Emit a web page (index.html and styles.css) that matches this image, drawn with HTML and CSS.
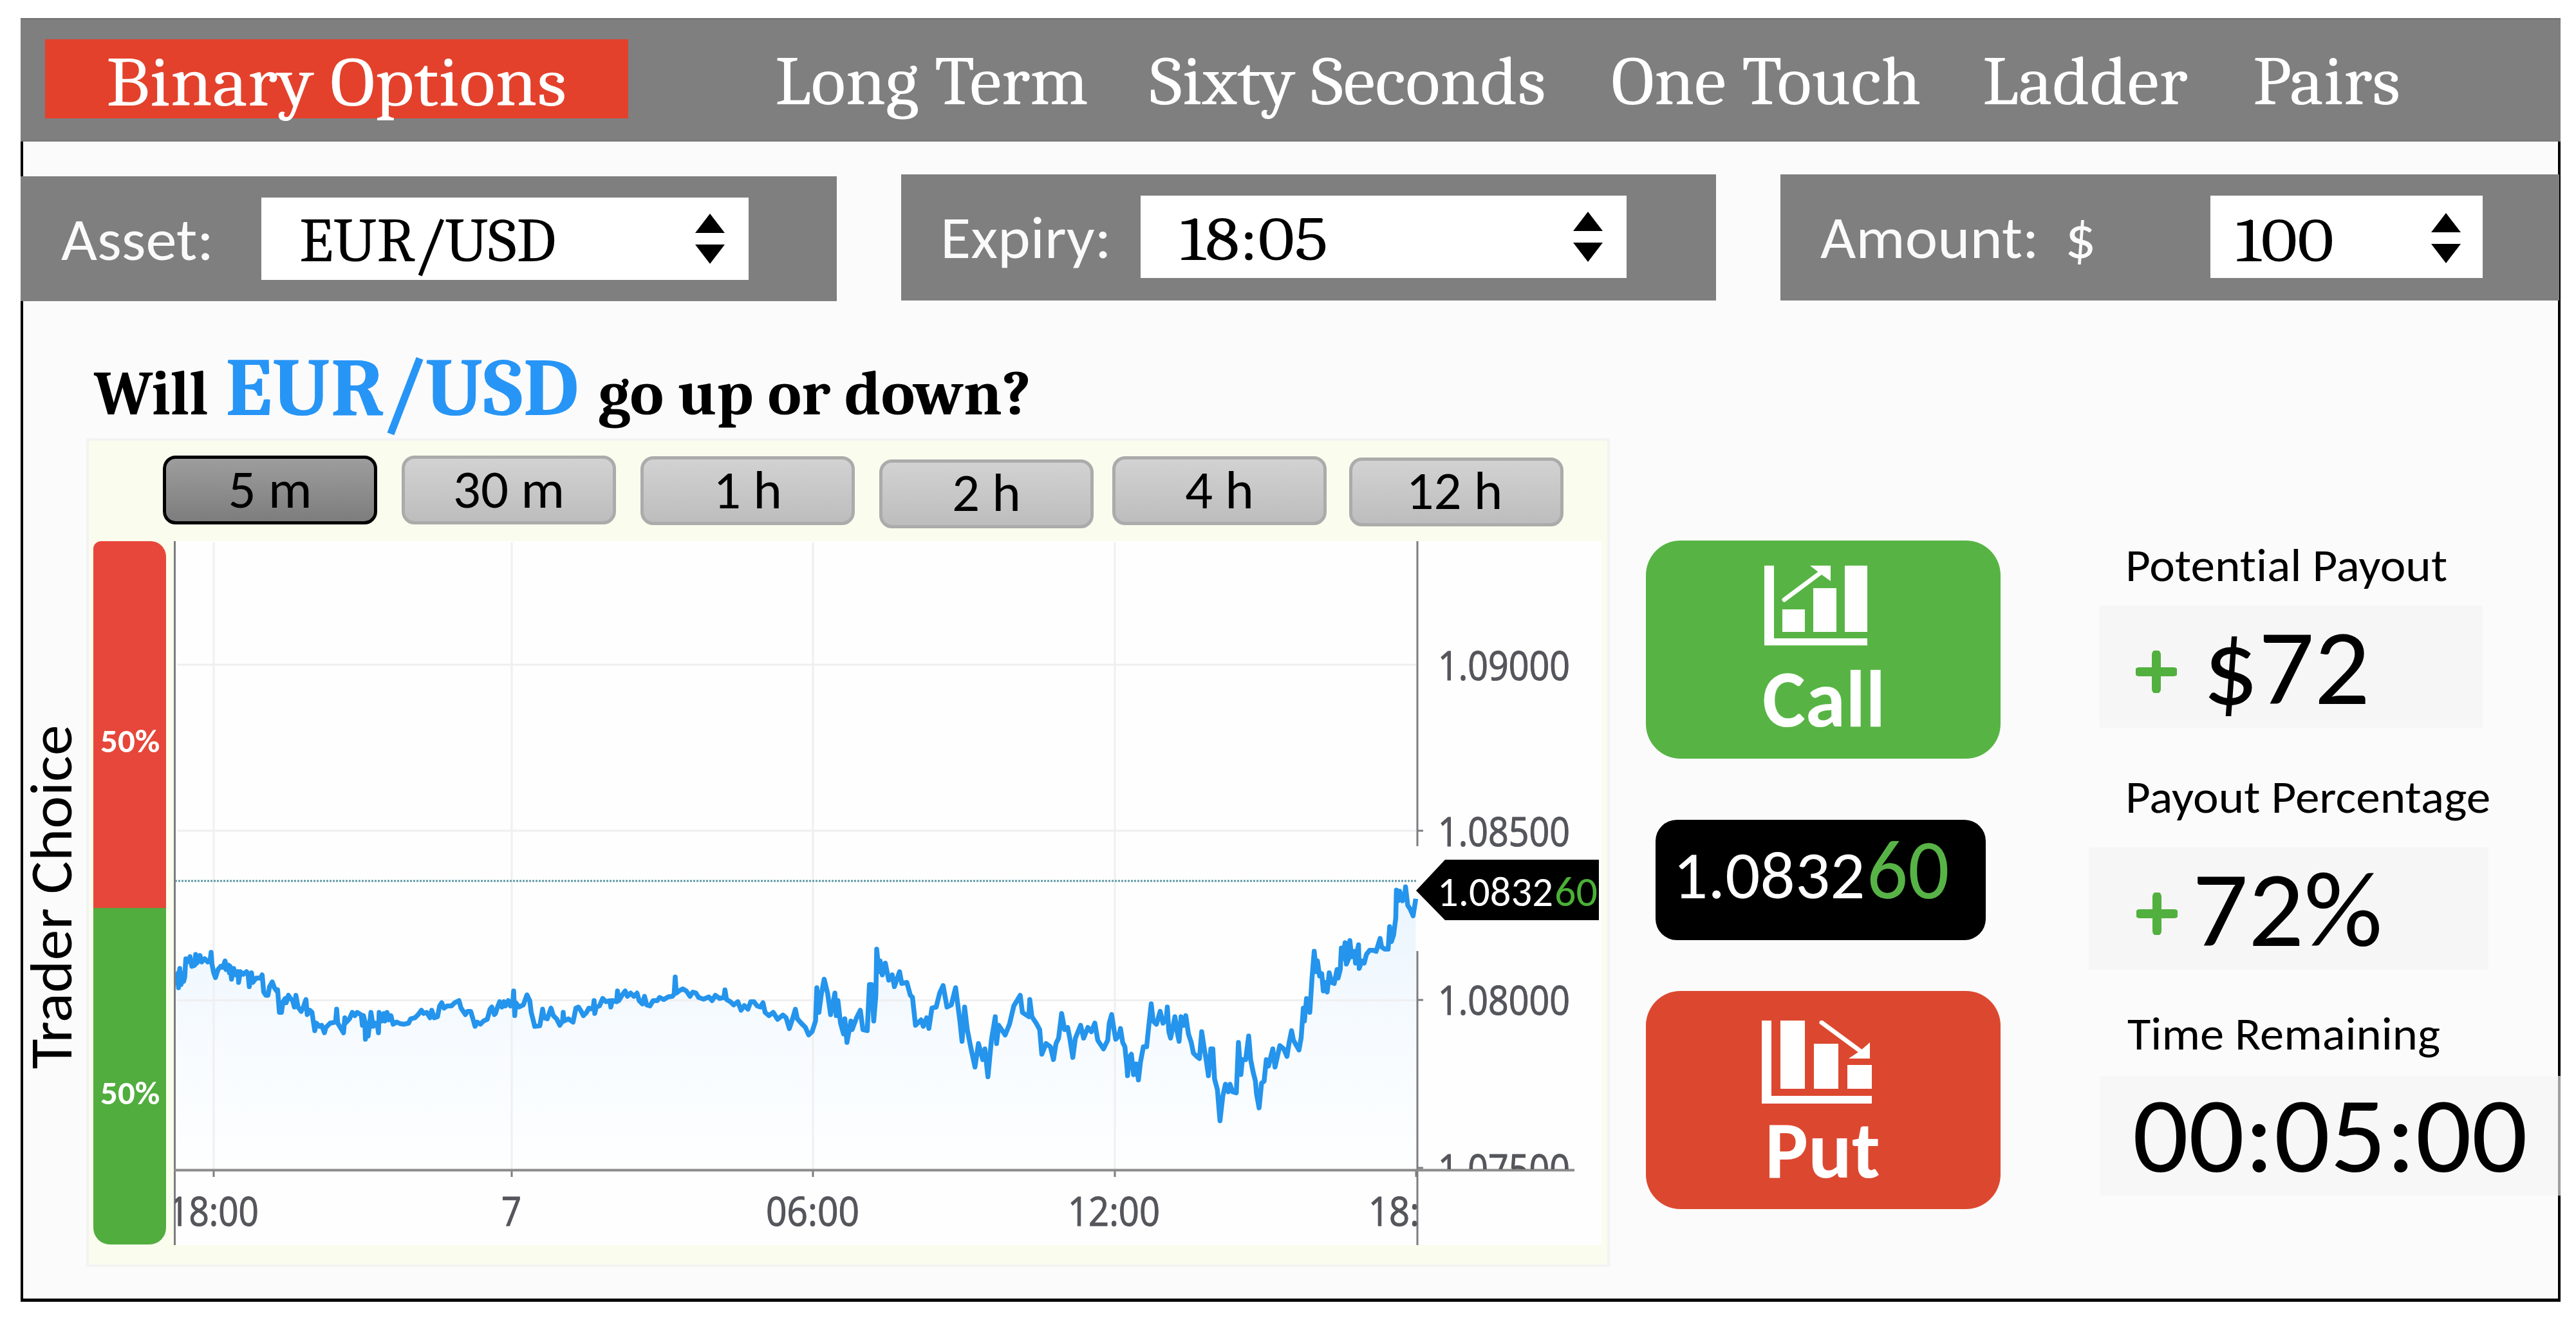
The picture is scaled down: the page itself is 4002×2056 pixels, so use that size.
FILE: index.html
```html
<!DOCTYPE html>
<html lang="en">
<head>
<meta charset="utf-8">
<title>Binary Options</title>
<link rel="stylesheet" href="styles.css">
</head>
<body>
<div class="app">
  <nav class="tabs">
    <a class="tab tab-active"><span class="fit">Binary Options</span></a>
    <div class="tab-list">
      <a class="tab"><span class="fit">Long Term</span></a>
      <a class="tab"><span class="fit">Sixty Seconds</span></a>
      <a class="tab"><span class="fit">One Touch</span></a>
      <a class="tab"><span class="fit">Ladder</span></a>
      <a class="tab"><span class="fit">Pairs</span></a>
    </div>
  </nav>
  <div class="body">
    <div class="toolbar">
      <div class="panel panel-asset">
        <span class="panel-label fit">Asset:</span>
        <div class="field"><span class="fit value">EUR<span class="slash">/</span>USD</span>
          <svg class="spin" viewBox="0 0 46 78"><path d="M23 0 46 30H0zM0 48H46L23 78z"/></svg></div>
      </div>
      <div class="panel panel-expiry">
        <span class="panel-label fit">Expiry:</span>
        <div class="field"><span class="fit value digits">18:05</span>
          <svg class="spin" viewBox="0 0 46 78"><path d="M23 0 46 30H0zM0 48H46L23 78z"/></svg></div>
      </div>
      <div class="panel panel-amount">
        <span class="panel-label fit">Amount:</span>
        <span class="panel-label currency fit">$</span>
        <div class="field"><span class="fit value digits">100</span>
          <svg class="spin" viewBox="0 0 46 78"><path d="M23 0 46 30H0zM0 48H46L23 78z"/></svg></div>
      </div>
    </div>
    <div class="main">
      <div class="side"><span class="side-label">Trader Choice</span></div>
      <section class="market">
        <h1 class="question"><span class="fit q-will">Will</span><span class="fit q-pair">EUR<span class="slash">/</span>USD</span><span class="fit q-rest">go up or down?</span></h1>
        <div class="card">
          <div class="ranges">
            <button class="range range-on"><span class="fit">5 m</span></button>
            <button class="range"><span class="fit">30 m</span></button>
            <button class="range r1"><span class="fit">1 h</span></button>
            <button class="range r2"><span class="fit">2 h</span></button>
            <button class="range r4"><span class="fit">4 h</span></button>
            <button class="range r12"><span class="fit">12 h</span></button>
          </div>
          <div class="chart-row">
            <div class="gauge">
              <div class="gauge-put"><span class="fit">50%</span></div>
              <div class="gauge-call"><span class="fit">50%</span></div>
            </div>
            <svg class="chart" viewBox="270 841 2218 1094">
              <defs>
                <linearGradient id="fade" x1="0" y1="1370" x2="0" y2="1818" gradientUnits="userSpaceOnUse">
                  <stop offset="0" stop-color="#e9f4fd"/><stop offset=".55" stop-color="#f7fbff"/><stop offset="1" stop-color="#fdffff"/>
                </linearGradient>
                <clipPath id="plot"><rect x="272" y="841" width="1930" height="1094"/></clipPath>
                <clipPath id="above"><rect x="2202" y="841" width="286" height="976"/></clipPath>
              </defs>
              <rect x="270" y="841" width="2218" height="1094" fill="#fefefe"/>
              <path id="area" fill="url(#fade)"/>
              <path class="grid" d="M332 843V1818M795 843V1818M1263 843V1818M1732 843V1818M275 1033H2200M275 1291H2200M275 1554.500H2200"/>
              <path class="level" d="M272 1369H2200"/>
              <path id="line" class="price-line"/>
              <path class="axis" d="M271.500 841V1935M2202 841V1315M2202 1478V1935M2202 1291H2211M2202 1554H2211M2202 1815H2211M332 1818V1829M795 1818V1829M1263 1818V1829M1732 1818V1829M2200 1818V1829"/>
              <path class="axis-x" d="M270 1818.500H2446"/>
              <path fill="#000" d="M2200 1384 2245 1336H2484V1430H2245z"/>
              <g class="tick">
                <text x="2234" y="1057" textLength="205">1.09000</text>
                <text x="2234" y="1315" textLength="205">1.08500</text>
                <text x="2234" y="1577" textLength="205">1.08000</text>
                <text x="2234" y="1839" textLength="205" clip-path="url(#above)">1.07500</text>
              </g>
              <g class="tick" clip-path="url(#plot)">
                <text x="262" y="1905" textLength="140">18:00</text>
                <text x="779" y="1905" textLength="31">7</text>
                <text x="1190" y="1905" textLength="145">06:00</text>
                <text x="1659" y="1905" textLength="143">12:00</text>
                <text x="2126" y="1905" textLength="143">18:00</text>
              </g>
              <text class="tag" x="2233" y="1408" textLength="180">1.0832</text>
              <text class="tag tag-frac" x="2415" y="1408" textLength="67">60</text>
            </svg>
          </div>
        </div>
      </section>
      <section class="trade">
        <button class="act act-call">
          <svg class="act-icon" viewBox="0 0 160 124"><path d="M0 0H15V113H160V124H0zM28 68H63V103H28zM76 35H112V103H76zM125 0H160V103H125z"/><path class="arrow" d="M31 53 90 9"/><path d="M71 0H103V24L89 14z"/></svg>
          <span class="fit">Call</span>
        </button>
        <div class="quote"><span class="fit q-main">1.0832</span><span class="fit q-frac">60</span></div>
        <button class="act act-put">
          <svg class="act-icon" viewBox="0 0 171 129"><path d="M0 0H15V117H171V129H0zM29 0H67V106H29zM81 36H119V106H81zM133 69H171V106H133z"/><path class="arrow" d="M93 3 154 48"/><path d="M168 34V59H135L153 47z"/></svg>
          <span class="fit">Put</span>
        </button>
      </section>
      <section class="stats">
        <span class="stat-label l1 fit">Potential Payout</span>
        <div class="stat s1"><svg class="plus" viewBox="0 0 64 66"><path d="M32 6V60M5 33H59"/></svg><span class="fit">$72</span></div>
        <span class="stat-label l2 fit">Payout Percentage</span>
        <div class="stat s2"><svg class="plus" viewBox="0 0 64 66"><path d="M32 6V60M5 33H59"/></svg><span class="fit">72%</span></div>
        <span class="stat-label l3 fit">Time Remaining</span>
        <div class="stat s3"><span class="fit">00:05:00</span></div>
      </section>
    </div>
  </div>
</div>
<script src="chart.js"></script>
</body>
</html>
```
FILE: styles.css
```css
* { box-sizing: border-box; }
body {
  margin: 0;
  width: 4002px;
  height: 2056px;
  overflow: hidden;
  background: #fff;
  font-family: Carlito, Calibri, "Open Sans", sans-serif;
  font-variant-ligatures: none;
  line-height: 1;
  color: #000;
}
button { border: 0; padding: 0; margin: 0; background: none; font: inherit; color: inherit; text-align: left; }
svg { display: block; flex: none; }
.fit { display: inline-block; flex: none; white-space: nowrap; transform: scaleX(var(--sx, 1)); transform-origin: 0 0; }
.slash { font-size: 1.12em; line-height: 0; vertical-align: -.08em; margin: 0 -.035em; }
.app { margin: 28px 0 0 32px; width: 3946px; height: 1992px; display: flex; flex-direction: column; }

/* Top tabs */
.tabs { height: 192px; flex: none; display: flex; background: #7f7f7f; border-top: 3px solid #777; border-bottom: 2px solid #777; color: #fff; font-family: Caladea, Cambria, serif; font-size: 107px; --sx: 1.045; }
.tab-active { margin: 30px 0 0 38px; width: 906px; height: 123px; background: #e3412c; padding: 13px 0 0 95px; font-size: 109px; --sx: 1.07; }
.tab-list { display: grid; grid-template-columns: 582px 717px 577px 420px 400px; margin: 43px 0 0 228px; }

.body { flex: 1; border: solid #000; border-width: 0 4px 5px; background: #fbfbfb; }

/* Asset / expiry / amount */
.toolbar { display: flex; align-items: flex-start; margin: 0 -2px 0 -4px; padding-top: 51px; height: 248px; }
.panel { display: flex; align-items: flex-start; height: 196px; background: #7f7f7f; font-size: 92px; color: #fafafa; --sx: 1.05; }
.panel-asset { width: 1268px; height: 194px; margin-top: 3px; padding-left: 63px; }
.panel-expiry { width: 1266px; margin-left: 100px; padding-left: 61px; }
.panel-amount { width: 1210px; margin-left: 100px; padding-left: 62px; --sx: 1.04; }
.panel-label { margin-top: 53px; width: 311px; }
.panel-amount .panel-label { width: 380px; }
.panel-amount .currency { width: 226px; }
.field { display: flex; justify-content: space-between; width: 757px; height: 128px; margin-top: 33px; padding: 25px 37px 0 59px; background: #fff; color: #000; font-family: Caladea, Cambria, serif; font-size: 96px; --sx: 1.02; }
.panel-expiry .field { width: 755px; }
.panel-amount .field { width: 423px; padding: 27px 34px 0 37px; }
.value { margin-top: -5px; }
.digits { --sx: 1.14; margin: -4px 0 0 2px; }
.spin { width: 46px; height: 78px; }

.main { display: grid; grid-template-columns: 98px 2367px 56px 551px 137px 732px; height: 1550px; }
.side { grid-column: 1; padding: 670px 0 0 0; }
.side-label { display: block; writing-mode: vertical-rl; font-size: 92px; width: 92px; margin-left: -2px; transform: rotate(180deg) scaleY(1.045); white-space: nowrap; }
.market { grid-column: 2; }
.question { display: flex; margin: 0; height: 213px; padding-left: 12px; font-family: Caladea, Cambria, serif; font-weight: 700; font-size: 97px; --sx: 1.025; }
.q-will { width: 204px; padding-top: 96px; --sx: .98; }
.q-pair { width: 579px; padding-top: 72px; font-size: 128px; color: #2795f6; --sx: 1.018; }
.q-rest { padding-top: 96px; }

/* Chart card */
.card { height: 1288px; border: 4px solid #f3f3f3; background: #fafced; padding: 23px 8px 0 7px; }
.ranges { display: flex; align-items: flex-start; height: 133px; padding-left: 108px; }
.range { flex: none; width: 333px; height: 107px; margin-right: 38px; border: 5px solid #ababab; border-radius: 20px; background: linear-gradient(#d2d2d2, #bdbdbd); font-size: 85px; display: flex; justify-content: center; padding-top: 5px; }
.range-on { border-color: #000; background: linear-gradient(#9d9d9d, #7d7d7d); }
.r1, .r4 { margin-top: 1px; }
.r2 { margin-top: 6px; margin-right: 29px; padding-top: 4px; }
.r4 { margin-right: 35px; }
.r12 { margin-top: 3px; margin-right: 0; padding: 4px 6px 0 0; }
.chart-row { display: flex; gap: 12px; }
.gauge { width: 113px; height: 1093px; color: #fff; font-weight: 700; font-size: 51px; --sx: 1.04; }
.gauge-put { height: 570px; background: #e7473a; border-radius: 12px 24px 0 0; padding: 285px 0 0 11px; }
.gauge-call { height: 523px; background: #52ad3f; border-radius: 0 0 26px 26px; padding: 262px 0 0 11px; }
.chart { width: 2218px; height: 1094px; }
.grid { fill: none; stroke: #efefef; stroke-width: 3; }
.level { fill: none; stroke: #5d97a8; stroke-width: 3; stroke-dasharray: 3 2; }
.price-line { fill: none; stroke: #2494ec; stroke-width: 7.5; stroke-linejoin: round; }
.axis { fill: none; stroke: #7b7d80; stroke-width: 3; }
.axis-x { fill: none; stroke: #8b8b8b; stroke-width: 4; }
.tick text { font: 63px "Open Sans", sans-serif; fill: #55565b; stroke: #55565b; stroke-width: 1.2; }
.tag { font-size: 66px; fill: #fff; }
.tag-frac { fill: #4bb036; }

/* Call / put */
.trade { grid-column: 4; padding-top: 372px; color: #fff; }
.act { display: flex; flex-direction: column; align-items: flex-start; width: 551px; height: 339px; border-radius: 54px; font-weight: 700; font-size: 125px; --sx: 1.01; }
.act-call { background: #57b444; padding: 39px 0 0 184px; }
.act-put { background: #dc482f; padding: 46px 0 0 180px; margin-top: 79px; }
.act-icon { fill: #fff; }
.act-call .act-icon { width: 160px; height: 124px; margin-bottom: 21px; }
.act-put .act-icon { width: 171px; height: 129px; margin-bottom: 10px; }
.act-call .fit { margin-left: -3px; }
.act-put .fit { margin-left: 5px; }
.arrow { stroke: #fff; stroke-width: 7; fill: none; stroke-linecap: round; }
.quote { display: flex; width: 513px; height: 187px; margin: 95px 0 0 15px; border-radius: 33px; background: #000; padding-left: 27px; font-size: 105px; --sx: 1.02; }
.q-main { width: 301px; padding-top: 34px; }
.q-frac { font-size: 132px; color: #58b347; padding-top: 11px; --sx: .96; }

/* Payout figures */
.stats { grid-column: 6; display: flex; flex-direction: column; align-items: flex-start; }
.stat-label { font-size: 71px; margin-left: 57px; --sx: 1.06; }
.l1 { margin-top: 375px; }
.l2 { margin-top: 72px; }
.l3 { margin: 64px 0 0 60px; --sx: 1.05; }
.stat { display: flex; font-size: 166px; background: #f6f6f6; height: 190px; --sx: 1.03; }
.s1 { width: 595px; margin: 27px 0 0 17px; padding-left: 56px; }
.s2 { width: 621px; margin-top: 43px; padding-left: 74px; }
.s3 { width: 717px; height: 186px; margin: 30px 0 0 17px; padding-left: 51px; background: rgba(244, 244, 244, .65); --sx: 1.034; }
.plus { width: 64px; height: 66px; margin-top: 70px; fill: none; stroke: #52b03f; stroke-width: 14; stroke-linecap: round; }
.s1 .fit { margin: 14px 0 0 40px; }
.s2 .fit { margin: 14px 0 0 23px; }
.s3 .fit { margin-top: 10px; }
```
FILE: chart.js
```
// Price samples, kept as segments: [x origin, y origin, x step, y step, samples]
const segments = [
  [268, 1440, 1 / 3, 1 / 3, '15,225 20,265 27,215 28,285 34,195 40,270 46,220 52,255 57,235 62,150 70,165 82,140 90,185 104,180 108,130 114,170 128,135 136,165 150,150 165,165 175,160 180,120 184,175 192,215 200,238 212,200 225,185 235,190 245,160 250,200 262,180 265,215 268,185 275,245 285,195 295,225 305,210 308,260 316,210 330,222 345,210 352,220 358,280 368,215 374,260 390,240 410,240 418,225 425,305 435,320 445,320 452,280 465,258 475,285 485,300 490,295 498,400 508,400 515,350 525,335 530,355 540,320 550,335 560,345 568,375 575,320 585,375 600,395 610,375 622,340 628,410 640,390 650,400 656,440 663,485 670,450 685,465 695,460 708,495 715,470 735,450 760,445 765,385 770,450 785,475 797,495 803,425 806,450 825,430 838,400 850,415 860,400 880,412 885,460 890,415 896,440 899,525 905,450 912,510 925,400 935,465 945,450 955,460 960,495 963,400 975,440 985,405 990,440 1000,400 1008,435 1018,415 1028,455 1045,445 1060,452 1080,455 1100,450 1110,430 1130,425 1145,410 1160,390 1170,405 1185,400 1200,425 1208,390 1220,425 1235,420 1245,370 1255,355 1265,380 1280,370 1300,370 1315,355 1335,345 1345,380 1365,410 1375,395 1390,395 1400,430 1410,465 1420,445 1435,455 1450,440 1467,432 1480,385 1488,375 1500,410'],
  [768, 1440, 1 / 3, 1 / 3, '5,405 15,375 25,350 35,375 45,350 52,370 65,345 75,370 85,365 90,300 95,415 100,355 115,375 135,365 152,318 165,345 172,400 182,440 188,465 212,462 225,385 232,425 247,430 264,380 275,415 290,430 305,460 318,440 321,400 325,440 345,430 367,445 380,380 392,375 402,390 415,415 430,400 440,380 460,385 465,345 468,405 475,375 490,370 505,335 520,350 538,345 543,375 550,345 570,350 574,300 580,345 595,320 610,300 620,325 635,310 650,325 665,310 675,345 690,360 700,325 710,365 725,370 740,345 760,345 770,330 790,340 810,328 830,325 838,315 843,235 848,310 860,300 878,290 895,300 912,325 925,305 940,310 952,330 975,338 1000,328 1015,345 1030,320 1050,335 1070,330 1075,295 1082,340 1100,350 1115,365 1135,350 1150,390 1165,368 1182,385 1195,350 1210,350 1225,370 1240,375 1252,355 1262,400 1280,415 1300,400 1320,432 1345,412 1360,425 1375,475 1390,430 1403,385 1412,430 1430,450 1450,470 1465,505'],
  [1200, 1400, 0.6696, 1 / 3, '92,610 100,560 103,405 108,520 113,440 120,365 128,430 135,530 145,430 148,535 152,465 158,570 165,620 168,550 173,660 182,560 185,600 195,545 204,510 210,600 220,605 225,390 230,390 235,560 240,440 242,225 247,330 250,280 255,345 262,290 270,370 278,345 283,400 295,330 300,385 312,380 320,440 325,450 332,580 345,555 350,585 358,545 363,595 370,500 380,495 388,430 396,395 405,495 415,485 425,405 435,560 440,655 446,495 452,600 460,680 470,775 478,665 488,740 493,690 500,820 508,650 517,540 520,665 525,580 540,625 550,575 560,490 575,440 580,520 595,540 597,460 602,540 612,570 620,600 625,715 635,665 645,680 652,740 658,665 664,640 671,525 678,600 685,590 690,640 697,730 703,640 715,580 722,640 732,590 740,610 748,570 755,650 768,690 778,650'],
  [1680, 1360, 0.338, 1 / 3, '122,760 128,690 139,650 150,720 158,765 172,750 180,715 190,780 200,800 210,900 212,935 220,850 230,835 240,930 252,880 262,955 272,870 285,800 300,800 310,700 321,600 330,680 345,695 362,635 375,690 390,670 395,615 402,730 410,760 420,710 430,660 440,730 449,775 458,660 470,700 480,655 492,740 505,780 515,830 530,845 543,855 553,730 565,810 575,870 584,935 595,810 604,810 612,950 625,1000 637,1145 650,1030 662,975 675,1010 683,975 695,1010 712,1015 722,780 733,930 740,860 755,860 769,750 778,860 790,920 800,960 805,1020 817,1085 828,970 840,960 850,860 860,890 880,810 890,895 900,850 912,795 930,810 945,845 955,780 966,725 975,770 1000,815 1010,760 1020,620 1025,680 1035,575 1050,640 1060,480 1070,355 1080,450 1085,400 1095,470 1105,460 1112,540 1120,500 1130,545 1139,455 1150,500 1162,505 1175,440 1180,480 1190,440 1195,340 1202,390 1212,315 1218,415 1228,390 1234,305 1242,380 1255,355 1260,410 1265,370 1274,325 1277,435 1290,400 1300,410 1310,370 1325,350 1340,350 1355,355 1373,295 1380,335 1395,345 1410,345 1417,240 1425,310 1435,280 1445,200 1448,70 1455,120 1463,75 1475,120 1485,110 1490,55 1500,140 1512,160 1525,190 1537,110']
];
const points = segments.flatMap(([x0, y0, kx, ky, samples]) =>
  samples.split(' ').map(s => {
    const [x, y] = s.split(',').map(Number);
    return (x0 + x * kx).toFixed(1) + ' ' + (y0 + y * ky).toFixed(1);
  }));
document.getElementById('line').setAttribute('d', 'M' + points.join('L'));
document.getElementById('area').setAttribute('d', 'M273 1818L' + points.join('L') + 'L2200 1818Z');
document.querySelectorAll('.chart text').forEach(t => t.setAttribute('lengthAdjust', 'spacingAndGlyphs'));
```
